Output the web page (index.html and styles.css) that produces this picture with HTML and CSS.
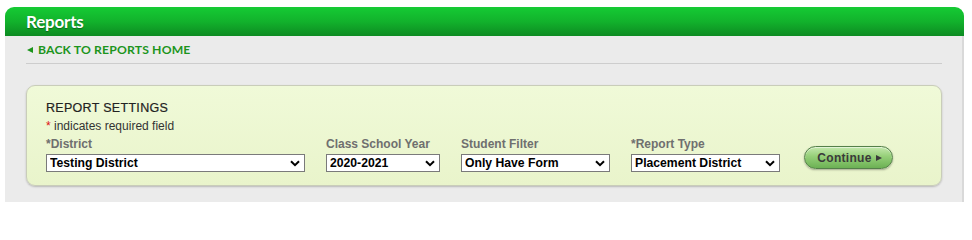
FILE: index.html
```html
<!DOCTYPE html>
<html>
<head>
<meta charset="utf-8">
<title>Reports</title>
<link rel="stylesheet" href="styles.css">
</head>
<body>
<div class="page">
  <div class="header"><h1 class="title">Reports</h1></div>
  <div class="content">
    <div class="back-row">
      <a class="back" href="#"><span class="tri"></span>BACK TO REPORTS HOME</a>
    </div>
    <div class="panel">
      <div class="panel-title">REPORT SETTINGS</div>
      <div class="req-note"><span class="star">*</span> indicates required field</div>
      <div class="fields">
        <div class="field">
          <label class="lbl">*District</label>
          <span class="sel-wrap w-district">
            <select class="sel"><option>Testing District</option></select>
            <svg class="chev" viewBox="0 0 10 7" width="10" height="7"><path d="M1 1.2 L5 5.2 L9 1.2" fill="none" stroke="#000" stroke-width="2"/></svg>
          </span>
        </div>
        <div class="field">
          <label class="lbl">Class School Year</label>
          <span class="sel-wrap w-year">
            <select class="sel"><option>2020-2021</option></select>
            <svg class="chev" viewBox="0 0 10 7" width="10" height="7"><path d="M1 1.2 L5 5.2 L9 1.2" fill="none" stroke="#000" stroke-width="2"/></svg>
          </span>
        </div>
        <div class="field">
          <label class="lbl">Student Filter</label>
          <span class="sel-wrap w-filter">
            <select class="sel"><option>Only Have Form</option></select>
            <svg class="chev" viewBox="0 0 10 7" width="10" height="7"><path d="M1 1.2 L5 5.2 L9 1.2" fill="none" stroke="#000" stroke-width="2"/></svg>
          </span>
        </div>
        <div class="field">
          <label class="lbl">*Report Type</label>
          <span class="sel-wrap w-type">
            <select class="sel"><option>Placement District</option></select>
            <svg class="chev" viewBox="0 0 10 7" width="10" height="7"><path d="M1 1.2 L5 5.2 L9 1.2" fill="none" stroke="#000" stroke-width="2"/></svg>
          </span>
        </div>
        <button class="continue" type="button">Continue <span class="btn-tri"></span></button>
      </div>
    </div>
  </div>
</div>
</body>
</html>
```

FILE: styles.css
```css
html, body {
  margin: 0;
  padding: 0;
  background: #ffffff;
}
.page {
  margin: 7px 0 0 5px;
  width: 959px;
}
.header {
  height: 29px;
  border-radius: 9px 9px 0 0;
  background: linear-gradient(to bottom, #15cb34 0%, #12b22c 50%, #0d8b22 100%);
  padding-left: 21px;
  box-sizing: border-box;
}
.title {
  margin: 0;
  font-family: Lato, "Open Sans", sans-serif;
  font-weight: 700;
  font-size: 17px;
  line-height: 29px;
  color: #ffffff;
  letter-spacing: -0.2px;
  text-shadow: 0 1px 1px rgba(0,0,0,0.35);
}
.content {
  background: #ebebeb;
  border-right: 2px solid #d9d9d9;
  box-sizing: border-box;
  padding: 0 20px 0 21px;
  height: 166px;
}
.back-row {
  height: 28px;
  border-bottom: 1px solid #cdcdcd;
  box-sizing: border-box;
  display: flex;
  align-items: flex-start;
  padding-top: 7px;
  padding-left: 1px;
}
.back {
  font-family: Lato, "Open Sans", sans-serif;
  font-weight: 700;
  font-size: 12.2px;
  line-height: 14px;
  color: #1d951d;
  text-decoration: none;
  display: flex;
  align-items: center;
  letter-spacing: 0.15px;
}
.tri {
  width: 0;
  height: 0;
  border-top: 3.5px solid transparent;
  border-bottom: 3.5px solid transparent;
  border-right: 6px solid #1d951d;
  margin-right: 5px;
}
.panel {
  margin-top: 21px;
  border: 1px solid #c9cdb9;
  border-radius: 9px;
  background: linear-gradient(to bottom, #f0fad8 0%, #e9f4cb 100%);
  box-shadow: 0 1px 2px rgba(0,0,0,0.22);
  padding: 13px 19px 13px 19px;
  height: 101px;
  box-sizing: border-box;
  font-family: "Liberation Sans", Arial, sans-serif;
  font-size: 12px;
  line-height: 18px;
}
.panel-title {
  color: #222222;
  font-size: 12.5px;
  letter-spacing: 0.3px;
  -webkit-text-stroke: 0.2px #222222;
}
.req-note {
  color: #333333;
}
.star {
  color: #dd1111;
}
.fields {
  display: flex;
  align-items: flex-end;
  gap: 21px;
}
.field {
  display: flex;
  flex-direction: column;
}
.lbl {
  color: #6f6f6f;
  font-size: 12px;
  font-weight: 700;
  line-height: 18px;
  height: 19px;
}
.sel-wrap {
  position: relative;
  display: block;
  height: 18px;
}
.w-district { width: 259px; }
.w-year { width: 114px; }
.w-filter { width: 149px; }
.w-type { width: 149px; }
.sel {
  -webkit-appearance: none;
  appearance: none;
  width: 100%;
  height: 18px;
  margin: 0;
  border: 1px solid #7a7a7a;
  border-radius: 0;
  background: #ffffff;
  font-family: "Liberation Sans", Arial, sans-serif;
  font-weight: 700;
  font-size: 12.2px;
  color: #000000;
  padding: 0 0 0 3px;
  box-sizing: border-box;
  line-height: 16px;
}
.chev {
  position: absolute;
  right: 5px;
  top: 6px;
  pointer-events: none;
}
.continue {
  margin-left: 3px;
  margin-bottom: 3px;
  width: 89px;
  height: 23px;
  border: 1px solid #55804a;
  border-radius: 12px;
  background: linear-gradient(to bottom, #c4e8ad 0%, #95cf78 45%, #6cb154 100%);
  box-shadow: 0 1px 2px rgba(0,0,0,0.3), inset 0 1px 0 rgba(255,255,255,0.5);
  font-family: "Liberation Sans", Arial, sans-serif;
  font-weight: 700;
  font-size: 12px;
  color: #3a3a3a;
  letter-spacing: 0.3px;
  padding: 0 0 0 2px;
  display: flex;
  align-items: center;
  justify-content: center;
  gap: 4px;
}
.btn-tri {
  width: 0;
  height: 0;
  border-top: 3.5px solid transparent;
  border-bottom: 3.5px solid transparent;
  border-left: 6px solid #3a3a3a;
}
```
